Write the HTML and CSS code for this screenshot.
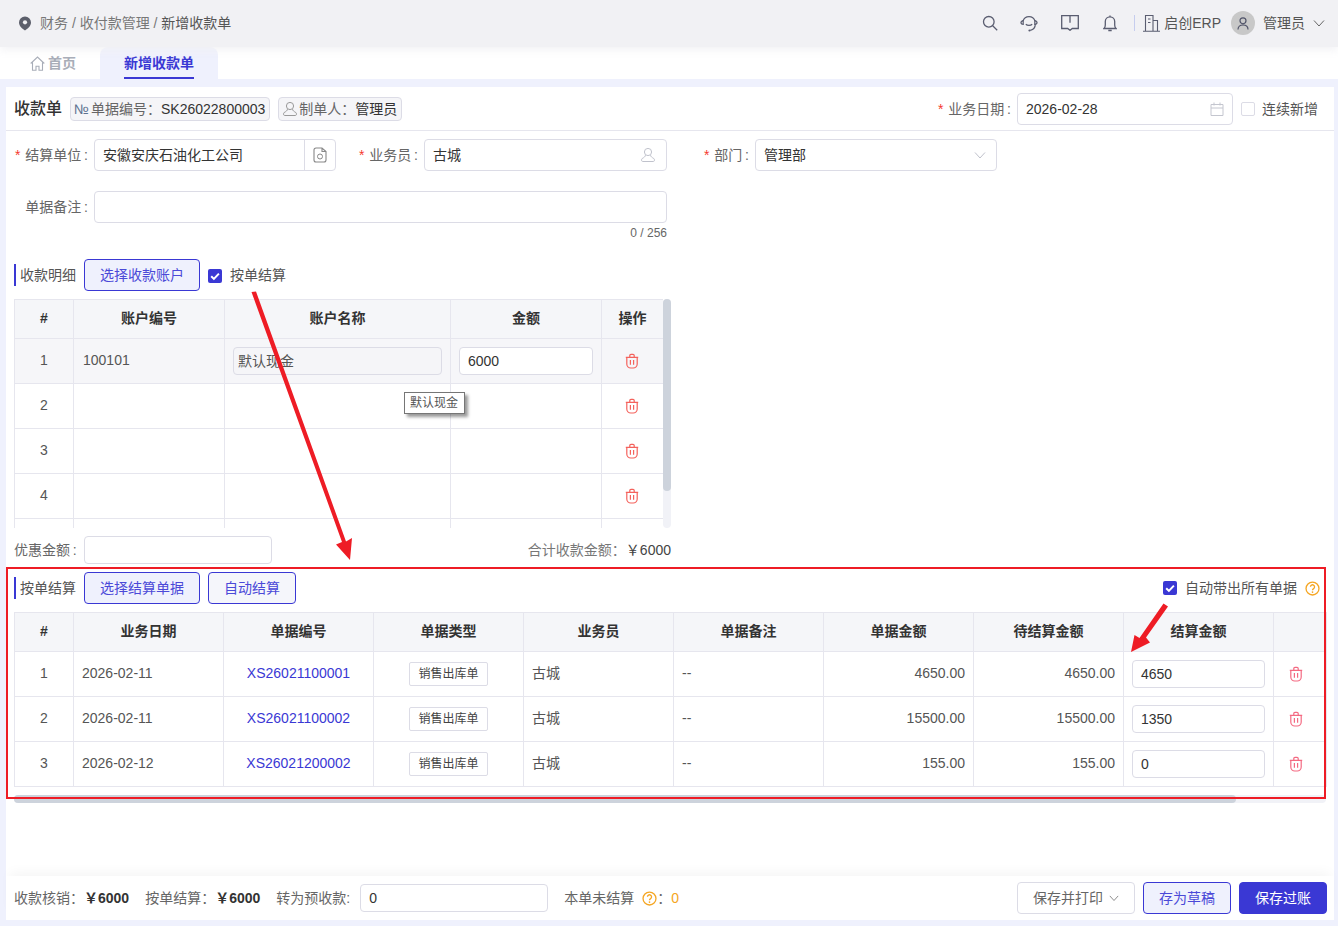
FILE: index.html
```html
<!DOCTYPE html>
<html lang="zh-CN">
<head>
    <meta charset="UTF-8">
    <title>新增收款单</title>
    <link rel="stylesheet" href="styles.css">
</head>
<body>
    <svg class="icon-defs" width="0" height="0">
        <symbol id="i-trash" viewBox="0 0 14 16">
            <path d="M.8 4.300h12.400M4.800 4.300V2.600a1.200 1.200 0 0 1 1.200-1.200h2a1.200 1.200 0 0 1 1.200 1.200v1.700M1.800 4.300v6.700a4 4 0 0 0 4 4h2.400a4 4 0 0 0 4-4V4.300M5.400 7v4.800M8.600 7v4.800" fill="none" stroke="currentColor" stroke-width="1.200"/>
        </symbol>
        <symbol id="i-help" viewBox="0 0 16 16">
            <circle cx="8" cy="8" r="6.900" fill="none" stroke="currentColor" stroke-width="1.400"/>
            <path d="M5.800 6.200a2.200 2.200 0 1 1 3.400 1.900c-.8.5-1.200.9-1.200 1.800" fill="none" stroke="currentColor" stroke-width="1.400"/>
            <circle cx="8" cy="11.800" r=".9" fill="currentColor"/>
        </symbol>
        <symbol id="i-check" viewBox="0 0 14 14">
            <path d="M3.200 7.200l2.700 2.700 5-5.300" fill="none" stroke="#fff" stroke-width="2"/>
        </symbol>
        <symbol id="i-down" viewBox="0 0 12 12">
            <path d="M1 3.500l5 5.500 5-5.500" fill="none" stroke="currentColor" stroke-width="1"/>
        </symbol>
        <symbol id="i-user" viewBox="0 0 16 16">
            <circle cx="8" cy="5" r="3.600" fill="none" stroke="currentColor" stroke-width="1"/>
            <path d="M5.500 8.200c-.3 1.500-1.500 2.300-3.300 3.300-1 .6-.8 3 .3 3h11c1.100 0 1.300-2.400.3-3-1.800-1-3-1.800-3.300-3.300" fill="none" stroke="currentColor" stroke-width="1"/>
        </symbol>
    </svg>

    <div class="app">
        <header class="topbar">
            <div class="crumbs">
                <svg class="pin" width="14" height="15" viewBox="0 0 14 15"><path d="M7 .5a6 6 0 0 1 6 6c0 3.500-3.500 6.500-6 8-2.500-1.500-6-4.500-6-8a6 6 0 0 1 6-6z" fill="#5c5f6b"/><circle cx="7" cy="6.300" r="2.100" fill="#f1f1f4"/></svg>
                <span>财务 / 收付款管理 / </span><span class="crumb-last">新增收款单</span>
            </div>
            <div class="top-tools">
                <svg width="16" height="16" viewBox="0 0 16 16"><circle cx="6.800" cy="6.800" r="5.300" fill="none" stroke="#5a5d70" stroke-width="1.300"/><path d="M10.700 10.700l4.500 4.500" stroke="#5a5d70" stroke-width="1.300"/></svg>
                <svg width="18" height="17" viewBox="0 0 18 17"><path d="M3 6a6.300 6.300 0 0 1 12 0M15.300 9c0 3.500-2.300 5.800-5 6.400M3 9.500" fill="none" stroke="#5a5d70" stroke-width="1.200"/><path d="M3 5.500C1.500 6 .8 7 1 8c.2.800 1 1.300 2.200 1.300V5.500zM15 5.500c1.500.5 2.200 1.500 2 2.500-.2.800-1 1.300-2.200 1.300V5.500zM5.800 9.300c1.600 1.500 4.800 1.500 6.400 0" fill="none" stroke="#5a5d70" stroke-width="1.200"/><circle cx="9.500" cy="15.500" r="1.100" fill="#5a5d70"/></svg>
                <svg width="18" height="16" viewBox="0 0 18 16"><path d="M.7.700h16.600v12.800h-6L9 15.300l-2.300-1.800h-6zM9 .7v7" fill="none" stroke="#5a5d70" stroke-width="1.300"/></svg>
                <svg width="14" height="17" viewBox="0 0 14 17"><path d="M1 13.500c1-1 1.300-2 1.300-3.500V6.500a4.700 4.700 0 0 1 9.400 0V10c0 1.500.3 2.500 1.300 3.500zM7 .5v1.300M5.300 15.500h3.400" fill="none" stroke="#5a5d70" stroke-width="1.300"/></svg>
                <i class="top-divider"></i>
                <div class="company">
                    <svg width="17" height="18" viewBox="0 0 17 18"><path d="M0 17.300h17M2.500 17V1.500h7.500V17M10 6.500h4.500V17M5 5h2.500M5 8.500h2.500" fill="none" stroke="#5a5d70" stroke-width="1.100"/></svg>
                    <span>启创ERP</span>
                </div>
                <div class="avatar">
                    <svg width="12" height="13" viewBox="0 0 12 13"><circle cx="6" cy="3.800" r="3" fill="none" stroke="#4f5268" stroke-width="1.200"/><path d="M1 12.500c0-3 2-4.500 5-4.500s5 1.500 5 4.500" fill="none" stroke="#4f5268" stroke-width="1.200"/></svg>
                </div>
                <span class="top-user">管理员</span>
                <svg class="top-caret" width="12" height="12"><use href="#i-down"/></svg>
            </div>
        </header>

        <nav class="tabs">
            <div class="tab tab-home">
                <svg width="15" height="15" viewBox="0 0 15 15"><path d="M.7 7.500L7.500 1l6.800 6.500M2.500 6.500v7.800h3.500v-4h3v4h3.500V6.500" fill="none" stroke="#a8adb8" stroke-width="1.100"/></svg>
                首页
            </div>
            <div class="tab tab-active"><span>新增收款单</span></div>
        </nav>

        <main class="card">
            <div class="card-head">
                <h1 class="title">收款单</h1>
                <div class="tag"><span class="no-mark">№</span>单据编号：<b>SK26022800003</b></div>
                <div class="tag"><svg width="16" height="16" class="tag-user"><use href="#i-user"/></svg>制单人：<b>管理员</b></div>
                <div class="head-right">
                    <label class="lbl"><em>*</em> 业务日期&thinsp;:</label>
                    <div class="input date-input">2026-02-28
                        <svg width="14" height="14" viewBox="0 0 14 14"><path d="M1 2.500h12v11H1zM1 6h12M4 .5v3M10 .5v3" fill="none" stroke="#c4c6cf"/></svg>
                    </div>
                    <span class="check"></span>
                    <span class="check-text">连续新增</span>
                </div>
            </div>

            <div class="card-body">
                <div class="form-grid">
                    <div class="form-item">
                        <label class="lbl"><em>*</em> 结算单位&thinsp;:</label>
                        <div class="input input-group">
                            <span class="group-text">安徽安庆石油化工公司</span>
                            <span class="group-add"><svg width="14" height="16" viewBox="0 0 14 16"><path d="M3 1h6l4 3.500V13a2 2 0 0 1-2 2H3a2 2 0 0 1-2-2V3a2 2 0 0 1 2-2zM9 1v3.500h4" fill="none" stroke="#888" stroke-width="1.100"/><circle cx="7" cy="9.500" r="2.500" fill="none" stroke="#888"/></svg></span>
                        </div>
                    </div>
                    <div class="form-item">
                        <label class="lbl"><em>*</em> 业务员&thinsp;:</label>
                        <div class="input input-split">古城<svg width="16" height="16" class="soft-icon"><use href="#i-user"/></svg></div>
                    </div>
                    <div class="form-item">
                        <label class="lbl"><em>*</em> 部门&thinsp;:</label>
                        <div class="input input-split">管理部<svg width="12" height="12" class="soft-icon"><use href="#i-down"/></svg></div>
                    </div>
                    <div class="form-item form-wide">
                        <label class="lbl">单据备注&thinsp;:</label>
                        <div class="input"></div>
                    </div>
                </div>
                <div class="counter">0 / 256</div>

                <div class="section-head section-first">
                    <span class="section-name">收款明细</span>
                    <button class="btn btn-light">选择收款账户</button>
                    <span class="check check-on"><svg width="14" height="14"><use href="#i-check"/></svg></span>
                    <span class="check-text">按单结算</span>
                </div>

                <div class="pay-wrap">
                    <div class="pay-clip">
                        <table class="grid pay-table">
                            <colgroup><col class="c59"><col class="c151"><col class="c226"><col class="c151"><col class="c62"></colgroup>
                            <thead>
                                <tr><th>#</th><th>账户编号</th><th>账户名称</th><th>金额</th><th>操作</th></tr>
                            </thead>
                            <tbody>
                                <tr class="row-hover">
                                    <td class="center">1</td><td class="acct">100101</td>
                                    <td class="ctl"><div class="input input-sm input-off">默认现金</div></td>
                                    <td class="ctl"><div class="input input-sm">6000</div></td>
                                    <td class="center"><svg class="trash" width="14" height="16"><use href="#i-trash"/></svg></td>
                                </tr>
                                <tr><td class="center">2</td><td></td><td></td><td></td><td class="center"><svg class="trash" width="14" height="16"><use href="#i-trash"/></svg></td></tr>
                                <tr><td class="center">3</td><td></td><td></td><td></td><td class="center"><svg class="trash" width="14" height="16"><use href="#i-trash"/></svg></td></tr>
                                <tr><td class="center">4</td><td></td><td></td><td></td><td class="center"><svg class="trash" width="14" height="16"><use href="#i-trash"/></svg></td></tr>
                                <tr><td></td><td></td><td></td><td></td><td></td></tr>
                            </tbody>
                        </table>
                    </div>
                    <div class="vbar"><div class="vbar-thumb"></div></div>
                </div>

                <div class="discount-row">
                    <label class="lbl">优惠金额&thinsp;:</label>
                    <div class="input input-sm discount-input"></div>
                    <div class="total">合计收款金额：<b>￥6000</b></div>
                </div>

                <div class="section-head">
                    <span class="section-name">按单结算</span>
                    <button class="btn btn-light">选择结算单据</button>
                    <button class="btn btn-plain">自动结算</button>
                    <div class="section-right">
                        <span class="check check-on"><svg width="14" height="14"><use href="#i-check"/></svg></span>
                        <span class="check-text">自动带出所有单据</span>
                        <svg class="help" width="15" height="15"><use href="#i-help"/></svg>
                    </div>
                </div>

                <table class="grid bill-table">
                    <colgroup><col class="c59"><col class="c150"><col class="c150"><col class="c150"><col class="c150"><col class="c150"><col class="c150"><col class="c150"><col class="c150"><col class="c53"></colgroup>
                    <thead>
                        <tr><th>#</th><th>业务日期</th><th>单据编号</th><th>单据类型</th><th>业务员</th><th>单据备注</th><th>单据金额</th><th>待结算金额</th><th>结算金额</th><th></th></tr>
                    </thead>
                    <tbody>
                        <tr>
                            <td class="center">1</td><td>2026-02-11</td><td class="center link">XS26021100001</td>
                            <td class="center ctl"><span class="bill-tag">销售出库单</span></td><td>古城</td><td>--</td>
                            <td class="right">4650.00</td><td class="right">4650.00</td>
                            <td class="ctl"><div class="input input-sm input-bill">4650</div></td>
                            <td class="center bill-del"><svg class="trash" width="14" height="16"><use href="#i-trash"/></svg></td>
                        </tr>
                        <tr>
                            <td class="center">2</td><td>2026-02-11</td><td class="center link">XS26021100002</td>
                            <td class="center ctl"><span class="bill-tag">销售出库单</span></td><td>古城</td><td>--</td>
                            <td class="right">15500.00</td><td class="right">15500.00</td>
                            <td class="ctl"><div class="input input-sm input-bill">1350</div></td>
                            <td class="center bill-del"><svg class="trash" width="14" height="16"><use href="#i-trash"/></svg></td>
                        </tr>
                        <tr>
                            <td class="center">3</td><td>2026-02-12</td><td class="center link">XS26021200002</td>
                            <td class="center ctl"><span class="bill-tag">销售出库单</span></td><td>古城</td><td>--</td>
                            <td class="right">155.00</td><td class="right">155.00</td>
                            <td class="ctl"><div class="input input-sm input-bill">0</div></td>
                            <td class="center bill-del"><svg class="trash" width="14" height="16"><use href="#i-trash"/></svg></td>
                        </tr>
                    </tbody>
                </table>
                <div class="hbar"><div class="hbar-thumb"></div></div>
            </div>

            <footer class="foot">
                <span class="foot-item">收款核销：<b>￥6000</b></span>
                <span class="foot-item">按单结算：<b>￥6000</b></span>
                <label class="lbl foot-label">转为预收款:</label>
                <div class="input input-sm foot-input">0</div>
                <span class="foot-item foot-open">本单未结算<svg class="help" width="15" height="15"><use href="#i-help"/></svg>：<i>0</i></span>
                <div class="foot-btns">
                    <button class="btn btn-default">保存并打印<svg width="10" height="10"><use href="#i-down"/></svg></button>
                    <button class="btn btn-light">存为草稿</button>
                    <button class="btn btn-primary">保存过账</button>
                </div>
            </footer>
        </main>
    </div>

    <div class="tooltip">默认现金</div>

    <!-- red marks drawn over the screenshot -->
    <svg class="marks" width="1338" height="926" viewBox="0 0 1338 926">
        <rect x="7" y="568" width="1318" height="230" fill="none" stroke="#ee1c25" stroke-width="2"/>
        <path d="M251.500 292l4.500-.5 90 250 6-3.500-2 22-14-15.500 6-2.500z" fill="#ee1c25"/>
        <path d="M1163.500 603.500l4.500 3-22 31 4 5-19 9.500 3.500-17 5 3z" fill="#ee1c25"/>
    </svg>
</body>
</html>
```

FILE: styles.css
```css
* {
    margin: 0;
    padding: 0;
    box-sizing: border-box;
}

html, body {
    width: 1338px;
    height: 926px;
    overflow: hidden;
}

body {
    font-family: "Liberation Sans", "Noto Sans CJK SC", sans-serif;
    font-size: 14px;
    line-height: 20px;
    color: #555;
    background: #eff1fd;
    position: relative;
}

.icon-defs {
    position: absolute;
}

.app {
    height: 926px;
    display: flex;
    flex-direction: column;
}

/* top bar */
.topbar {
    height: 47px;
    flex: none;
    background: #f1f1f4;
    box-shadow: 0 3px 8px rgba(241, 241, 244, 0.9);
    display: flex;
    align-items: center;
    justify-content: space-between;
    padding: 0 13px 1px 18px;
    position: relative;
    z-index: 2;
}

.crumbs {
    display: flex;
    align-items: center;
    color: #777;
    white-space: pre;
}

.pin {
    margin-right: 8px;
}

.crumb-last {
    color: #555;
}

.top-tools {
    display: flex;
    align-items: center;
}

.top-tools > svg {
    flex: none;
}

.top-tools > svg:nth-child(1) { margin-right: 22px; }
.top-tools > svg:nth-child(2) { margin-right: 23px; }
.top-tools > svg:nth-child(3) { margin-right: 24px; }

.top-divider {
    width: 1px;
    height: 16px;
    background: #c6cdee;
    margin: 0 8px 0 17px;
}

.company {
    display: flex;
    align-items: center;
    gap: 4px;
}

.avatar {
    width: 24px;
    height: 24px;
    border-radius: 50%;
    background: #c8c8c8;
    margin: 0 8px 0 10px;
    display: flex;
    align-items: center;
    justify-content: center;
}

.top-user {
    margin-right: 8px;
}

.top-caret {
    color: #666;
}

/* tabs */
.tabs {
    height: 32px;
    flex: none;
    background: #fff;
    display: flex;
}

.tab {
    font-weight: 700;
    display: flex;
    align-items: center;
}

.tab-home {
    width: 100px;
    padding-left: 30px;
    gap: 3px;
    color: #a8adb8;
}

.tab-active {
    width: 118px;
    justify-content: center;
    background: #eff1fd;
    border-radius: 8px 8px 0 0;
    color: #3a38d4;
}

.tab-active span {
    height: 32px;
    line-height: 32px;
    border-bottom: 2px solid #3a38d4;
}

/* main card */
.card {
    margin: 8px 4px 6px 6px;
    flex: 1;
    min-height: 0;
    background: #fff;
    display: flex;
    flex-direction: column;
}

.card-head {
    height: 44px;
    flex: none;
    border-bottom: 1px solid #e6e6ee;
    padding: 0 16px 0 8px;
    display: flex;
    align-items: center;
}

.title {
    font-size: 16px;
    font-weight: 500;
    color: #333;
    margin-right: 8px;
}

.tag {
    height: 24px;
    padding: 0 4px 0 3px;
    margin-right: 8px;
    background: #f5f5f8;
    border: 1px solid #dcdce6;
    border-radius: 4px;
    display: flex;
    align-items: center;
    color: #666;
    white-space: nowrap;
}

.tag b {
    font-weight: 400;
    color: #333;
}

.no-mark {
    color: #5d7290;
    width: 14px;
    margin-right: 3px;
    font-size: 14px;
}

.tag-user {
    color: #999;
    margin-right: 1px;
}

.head-right {
    margin-left: auto;
    display: flex;
    align-items: center;
}

.lbl {
    color: #666;
    white-space: nowrap;
}

.lbl em {
    color: #f5392e;
    font-style: normal;
    margin-right: 1px;
}

.input {
    height: 32px;
    border: 1px solid #dcdce6;
    border-radius: 4px;
    background: #fff;
    padding: 0 8px;
    display: flex;
    align-items: center;
    color: #333;
}

.date-input {
    width: 216px;
    margin-left: 6px;
    justify-content: space-between;
}

.check {
    width: 14px;
    height: 14px;
    flex: none;
    border: 1px solid #dcdce6;
    border-radius: 2px;
    background: #fff;
    margin-left: 8px;
}

.check-text {
    margin-left: 7px;
    color: #555;
    white-space: nowrap;
}

.check-on {
    border: none;
    background: #3a38d4;
    display: block;
}

.check-on svg {
    display: block;
}

.card-body {
    flex: 1;
    min-height: 0;
    padding: 8px 8px 0;
    overflow: hidden;
}

/* form */
.form-grid {
    display: grid;
    grid-template-columns: 322px 323px 322px;
    column-gap: 8px;
    row-gap: 20px;
}

.form-item {
    display: flex;
    align-items: center;
}

.form-item .lbl {
    width: 80px;
    flex: none;
    text-align: right;
    padding-right: 6px;
}

.form-item .input {
    flex: 1;
}

.form-wide {
    grid-column: 1 / 3;
}

.input-group {
    padding: 0;
}

.group-text {
    flex: 1;
    padding-left: 8px;
}

.group-add {
    width: 31px;
    height: 30px;
    border-left: 1px solid #dcdce6;
    display: flex;
    align-items: center;
    justify-content: center;
}

.input-split {
    justify-content: space-between;
}

.soft-icon {
    color: #c0c2cc;
    margin-right: 2px;
}

.counter {
    width: 653px;
    height: 20px;
    line-height: 20px;
    text-align: right;
    font-size: 12px;
    color: #666;
}

/* sections */
.section-head {
    height: 32px;
    display: flex;
    align-items: center;
    margin-top: 8px;
}

.section-head .check-text {
    margin-left: 8px;
}

.section-first {
    margin-top: 16px;
}

.section-first .check-on {
    margin-top: 2px;
}

.section-name {
    height: 22px;
    line-height: 22px;
    border-left: 2px solid #3a38d4;
    padding-left: 4px;
    width: 70px;
    flex: none;
    color: #555;
}

.section-right {
    margin-left: auto;
    display: flex;
    align-items: center;
    padding-right: 6px;
}

.help {
    color: #f5a623;
    margin-left: 8px;
    flex: none;
}

.btn {
    height: 32px;
    padding: 0 15px;
    border: 1px solid #3a38d4;
    border-radius: 4px;
    font: inherit;
    white-space: nowrap;
    cursor: pointer;
}

.btn-light {
    background: #eff1fd;
    color: #4b49d8;
}

.btn-plain {
    background: #f5f6fb;
    color: #4b49d8;
    margin-left: 8px;
}

.btn-default {
    background: #fff;
    border-color: #dcdce6;
    color: #666;
}

.btn-default svg {
    margin-left: 6px;
    color: #777;
}

.btn-primary {
    background: #3a38d4;
    color: #fff;
}

/* tables */
.grid {
    border-collapse: collapse;
    table-layout: fixed;
}

.grid th,
.grid td {
    border: 1px solid #e6e6ee;
    padding: 0 8px 2px;
}

.grid th {
    height: 39px;
    background: #f5f6f9;
    color: #333;
    font-weight: 700;
    text-align: center;
}

.grid td {
    height: 45px;
    color: #555;
}

.grid td.ctl {
    padding-bottom: 0;
}

.c53 { width: 53px; }
.c59 { width: 59px; }
.c62 { width: 62px; }
.c150 { width: 150px; }
.c151 { width: 151px; }
.c226 { width: 226px; }

.center { text-align: center; }
.right { text-align: right; }

.pay-wrap {
    margin-top: 8px;
    height: 229px;
    display: flex;
}

.pay-clip {
    width: 649px;
    height: 229px;
    overflow: hidden;
}

.pay-table {
    width: 649px;
}

.grid td.acct {
    padding-left: 9px;
}

.pay-table td:last-child {
    padding-right: 10px;
}

.row-hover td {
    background: #f6f6f9;
}

.input-sm {
    height: 28px;
}

.input-off {
    background: #f5f5f8;
    padding: 0 4px;
    color: #555;
}

.trash {
    color: #f4625c;
    display: inline-block;
    vertical-align: middle;
}

.vbar {
    width: 8px;
    height: 229px;
    background: #f1f2f7;
    border-radius: 4px;
}

.vbar-thumb {
    height: 192px;
    background: #cdd3dc;
    border-radius: 4px;
}

.discount-row {
    width: 657px;
    height: 28px;
    margin-top: 8px;
    display: flex;
    align-items: center;
}

.discount-input {
    width: 188px;
    flex: none;
    margin-left: 7px;
}

.total {
    margin-left: auto;
    color: #777;
}

.total b {
    font-weight: 400;
    color: #444;
}

.bill-table {
    width: 1312px;
    margin-top: 8px;
}

.link {
    color: #3a38d4 !important;
}

.bill-tag {
    display: inline-block;
    height: 24px;
    line-height: 22px;
    padding: 0 8px;
    font-size: 12px;
    border: 1px solid #dcdce6;
    border-radius: 2px;
    color: #444;
    background: #fff;
}

.input-bill {
    color: #333;
}

.bill-del {
    padding-right: 17px !important;
}

.bill-del .trash {
    color: #f46a82;
}

.hbar {
    margin-top: 8px;
    height: 8px;
    background: #f1f2f7;
    border-radius: 4px;
}

.hbar-thumb {
    width: 1222px;
    height: 8px;
    background: #cdd3dc;
    border-radius: 4px;
}

/* footer */
.foot {
    height: 44px;
    flex: none;
    background: #fff;
    box-shadow: 0 -8px 12px -4px rgba(0, 0, 0, 0.04);
    padding: 0 7px 0 8px;
    display: flex;
    align-items: center;
    position: relative;
}

.foot-item {
    color: #666;
    margin-right: 16px;
    display: flex;
    align-items: center;
    white-space: nowrap;
}

.foot-item b {
    color: #333;
}

.foot-input {
    width: 188px;
    margin-left: 10px;
    flex: none;
}

.foot-open {
    margin-left: 16px;
    margin-right: 0;
}

.foot-open i {
    font-style: normal;
    color: #f5a623;
}

.foot-btns {
    margin-left: auto;
    display: flex;
    gap: 8px;
}

/* overlays */
.tooltip {
    position: absolute;
    left: 404px;
    top: 392px;
    height: 22px;
    line-height: 20px;
    padding: 0 6px 0 5px;
    font-size: 12px;
    background: #fff;
    border: 1px solid #767676;
    color: #555;
    box-shadow: 3px 3px 3px rgba(0, 0, 0, 0.4);
}

.marks {
    position: absolute;
    left: 0;
    top: 0;
    pointer-events: none;
}
```
